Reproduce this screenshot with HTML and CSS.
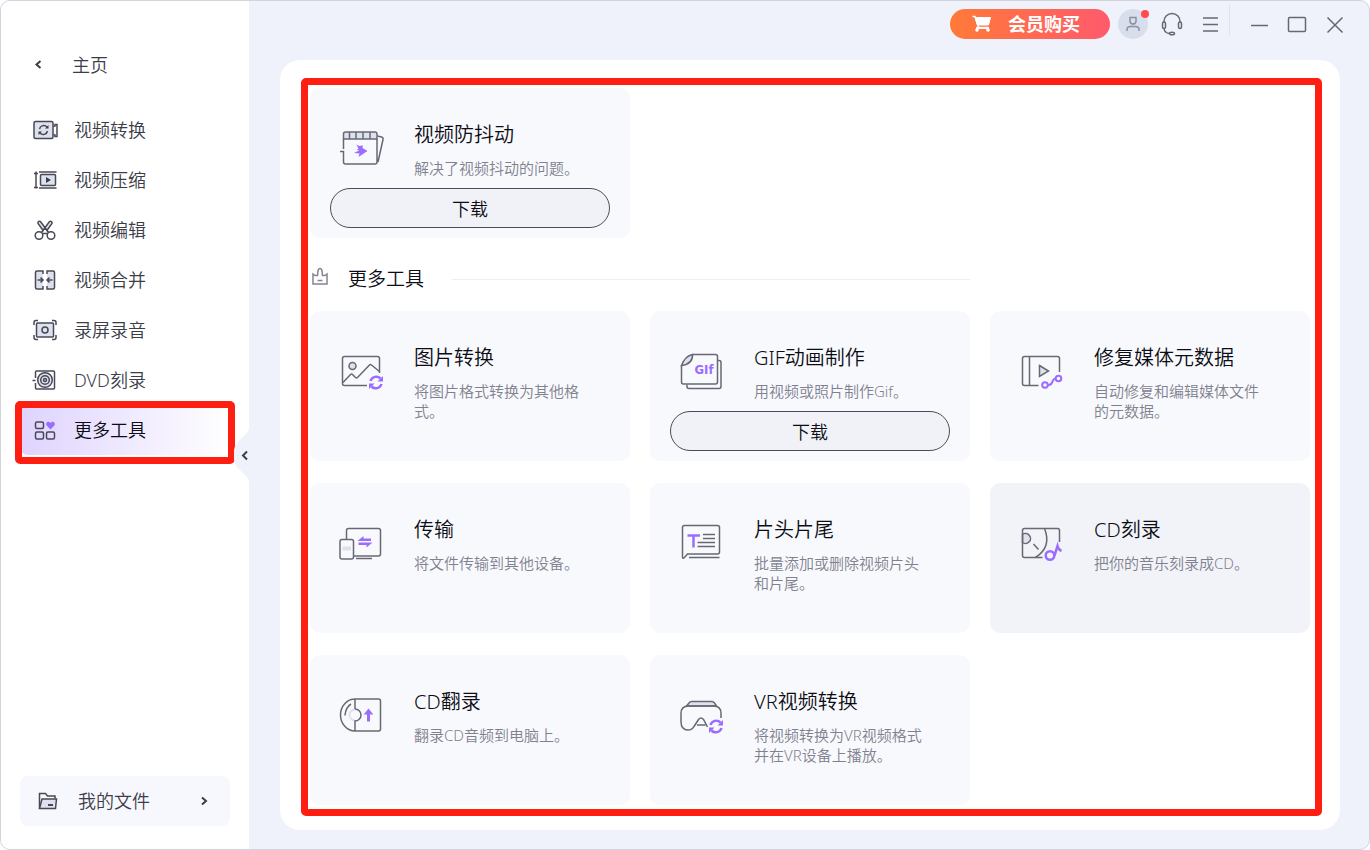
FILE: index.html
```html
<!DOCTYPE html>
<html lang="zh-CN">
<head>
    <meta charset="UTF-8">
    <meta name="viewport" content="width=device-width, initial-scale=1.0">
    <title>更多工具</title>
    <link rel="stylesheet" href="styles.css">
</head>
<body>
    <svg class="sprite" aria-hidden="true">
        <symbol id="refresh" viewBox="0 0 16 16">
            <path d="M2.5 6.5A6 6 0 0 1 12.5 4M13.5 9.5A6 6 0 0 1 3.5 12" fill="none" stroke="currentColor" stroke-width="2.5"/>
            <path d="M15 1.5V7H9.5zM1 14.5V9h5.5z" fill="currentColor"/>
        </symbol>
    </svg>

    <div class="window">
        <aside class="sidebar">
            <a href="#" class="home">
                <svg class="nav-icon" viewBox="0 0 26 26"><path d="M8.5 9L4.5 12.5l4 3.5" class="chevron"/></svg>
                <span>主页</span>
            </a>

            <nav class="nav">
                <a href="#" class="nav-item">
                    <svg class="nav-icon" viewBox="0 0 26 26">
                        <rect x="2" y="4.5" width="19" height="17" rx="1.5" class="tint"/>
                        <path d="M21.5 9.5l1.5-.5V7.5h2v12h-2V18l-1.5-.5"/>
                        <path d="M7.5 12a4.3 4.3 0 0 1 7.5-2M15.5 14a4.3 4.3 0 0 1-7.5 2"/>
                        <path d="M16.5 8v3.5H13zM6.500 18v-3.5H10z" class="solid"/>
                    </svg>
                    <span>视频转换</span>
                </a>
                <a href="#" class="nav-item">
                    <svg class="nav-icon" viewBox="0 0 26 26">
                        <path d="M2 6.5h4M4 4.5v17M2 20.5h4M7 21h17.5M7 5h17.5"/>
                        <rect x="8.5" y="7.5" width="15" height="11" rx="1" class="tint"/>
                        <path d="M14 10l5 3-5 3z" class="solid"/>
                    </svg>
                    <span>视频压缩</span>
                </a>
                <a href="#" class="nav-item">
                    <svg class="nav-icon" viewBox="0 0 26 26">
                        <circle cx="7" cy="18.5" r="3.8"/>
                        <circle cx="19" cy="18.5" r="3.8"/>
                        <path d="M9.5 15.5l8-11c1.5-1 3 .5 2.5 2l-5.5 7.5M16.5 15.5l-8-11c-1.5-1-3 .5-2.5 2l5.500 7.500M10.500 16.500h5" class="tint"/>
                    </svg>
                    <span>视频编辑</span>
                </a>
                <a href="#" class="nav-item">
                    <svg class="nav-icon" viewBox="0 0 26 26">
                        <path d="M11 7V4H5Q3.5 4 3.5 5.5v15Q3.5 22 5 22h6v-3M15 7V4h6q1.5 0 1.5 1.5v15q0 1.5-1.5 1.5h-6v-3" class="tint"/>
                        <path d="M5.5 13H11M8.5 10.5L11 13l-2.5 2.5M20.5 13H15M17.5 10.5L15 13l2.5 2.5"/>
                    </svg>
                    <span>视频合并</span>
                </a>
                <a href="#" class="nav-item">
                    <svg class="nav-icon" viewBox="0 0 26 26">
                        <path d="M2 8V5.5Q2 3.5 4 3.5h2M20 3.5h2q2 0 2 2V8M24 18v2.5q0 2-2 2h-2M6 22.5H4q-2 0-2-2V18"/>
                        <rect x="4.5" y="6" width="17" height="14" rx="1" class="tint"/>
                        <circle cx="13" cy="13" r="3"/>
                    </svg>
                    <span>录屏录音</span>
                </a>
                <a href="#" class="nav-item">
                    <svg class="nav-icon" viewBox="0 0 26 26">
                        <path d="M3.5 11V5q0-1 1-1h17q1 0 1 1v16q0 1-1 1h-17q-1 0-1-1v-5M.5 13.5h3"/>
                        <circle cx="13" cy="13" r="7.3" class="tint"/>
                        <circle cx="13" cy="13" r="4.3"/>
                        <circle cx="13" cy="13" r="1.5"/>
                    </svg>
                    <span>DVD刻录</span>
                </a>
                <a href="#" class="nav-item active">
                    <svg class="nav-icon" viewBox="0 0 26 26">
                        <rect x="3.5" y="5" width="8" height="6.5" rx="1.5"/>
                        <rect x="3.5" y="15" width="8" height="7" rx="1.5"/>
                        <rect x="14.5" y="15" width="8" height="7" rx="1.5"/>
                        <path d="M18.5 12.5l-4-4.2c-1.500-2.300 2-5 4-2.300 2-2.700 5.500 0 4 2.300z" class="accent-solid"/>
                    </svg>
                    <span>更多工具</span>
                </a>
            </nav>

            <a href="#" class="my-files">
                <svg class="nav-icon" viewBox="0 0 26 26">
                    <path d="M5.5 20.5v-15h6l2 2.5h7.5v2.5"/>
                    <path d="M5.5 20.5l2.5-9.5h14.5l-1 9.5z" class="tint"/>
                    <path d="M14 17h5" stroke-width="2"/>
                </svg>
                <span>我的文件</span>
                <svg class="arrow" viewBox="0 0 12 12"><path d="M4 2.5L8 6l-4 3.5" class="chevron"/></svg>
            </a>

            <button class="collapse" aria-label="收起">
                <svg viewBox="0 0 16 54">
                    <path d="M16 0C15 8 2 12 1 22v10c1 10 14 14 15 22z" class="notch"/>
                    <path d="M14 23.5l-4 4 4 4" class="chevron"/>
                </svg>
            </button>
        </aside>

        <main class="main">
            <header class="topbar">
                <button class="buy">
                    <svg viewBox="0 0 20 18">
                        <path d="M.5 1.5H3L6.5 12.5h10" fill="none" stroke="#fff" stroke-width="1.5"/>
                        <path d="M3 2.5h15.5L16.5 10H5.5z" fill="#fff" stroke="#fff" stroke-width="1"/>
                        <path d="M4 13h13" stroke="#fff" stroke-width="2"/>
                        <circle cx="5" cy="15" r="1.8" fill="#fff" stroke="none"/>
                        <circle cx="16" cy="15" r="1.8" fill="#fff" stroke="none"/>
                    </svg>
                    <span>会员购买</span>
                </button>
                <button class="avatar" aria-label="账户">
                    <svg viewBox="0 0 16 16">
                        <path d="M5 1.5h6v4q-.5 2.5-3 2.5T5 5.5zM2 15v-1.5q0-3 3.5-3h5q3.5 0 3.5 3V15"/>
                    </svg>
                    <span class="dot"></span>
                </button>
                <button class="bar-btn" aria-label="客服">
                    <svg viewBox="0 0 24 24">
                        <path d="M4 11V9.5a8 8 0 0 1 16 0V11"/>
                        <rect x="2.5" y="10" width="3" height="6.5" rx="1.5"/>
                        <rect x="18.5" y="10" width="3" height="6.5" rx="1.5"/>
                        <path d="M4 16.5q.5 4.5 5.5 5"/>
                        <ellipse cx="12" cy="21.5" rx="2.5" ry="1.3"/>
                    </svg>
                </button>
                <button class="bar-btn" aria-label="菜单">
                    <svg viewBox="0 0 24 24"><path d="M5 6h15M5 12.5h15M5 19h15"/></svg>
                </button>
                <span class="divider"></span>
                <button class="bar-btn" aria-label="最小化">
                    <svg viewBox="0 0 24 24"><path d="M4 13.5h17"/></svg>
                </button>
                <button class="bar-btn" aria-label="最大化">
                    <svg viewBox="0 0 24 24"><rect x="3.5" y="5.5" width="17" height="14" rx="1"/></svg>
                </button>
                <button class="bar-btn" aria-label="关闭">
                    <svg viewBox="0 0 24 24"><path d="M4.5 5.5l15 15M19.5 5.5l-15 15"/></svg>
                </button>
            </header>

            <div class="panel">
                <section class="tool-grid">
                    <article class="card">
                        <svg class="card-icon" viewBox="0 0 48 48">
                            <path d="M5.5 15V10q0-2 2-2H37q2 0 2 2v5z" class="tint"/>
                            <path d="M11.5 8v7M18 8v7M25 8v7M32 8v7"/>
                            <path d="M5.5 15v10M2 27.5h3.5V38q0 2 2 2H37q2 0 2-2V15M39.5 12l4 1q2 .5 1.5 2.5L40 38"/>
                            <path d="M18.5 20.5l2.5 1.500 4-.5-.5 2.500 5 3-9 6 1-3.500-5.500-.5 5-2.500-2.500-1.500h2z" class="accent-solid"/>
                        </svg>
                        <div class="card-text">
                            <h3>视频防抖动</h3>
                            <p>解决了视频抖动的问题。</p>
                        </div>
                        <button class="download">下载</button>
                    </article>
                </section>

                <div class="tool-grid heading-row">
                    <h2 class="heading">
                        <svg viewBox="0 0 20 20">
                            <path d="M3 7v10h14V7l-2 1.500-2.500 0L12 4q-.5-2.500-2-2.500T8 4l-.5 4.500H5z"/>
                            <path d="M7.5 13.5h5"/>
                        </svg>
                        <span>更多工具</span>
                    </h2>
                </div>

                <section class="tool-grid">
                    <article class="card">
                        <svg class="card-icon" viewBox="0 0 48 48">
                            <path d="M29 38.5H6.5q-2 0-2-2v-25q0-2 2-2h33q2 0 2 2V26"/>
                            <circle cx="14.5" cy="19" r="3.5" class="tint"/>
                            <path d="M5 35.5l7.5-8q1-1 2 0l3 3q1 1 2 0l12-12.5q1-1 2 0l8 6.5"/>
                            <use href="#refresh" x="30" y="27.5" width="16" height="16" class="accent"/>
                        </svg>
                        <div class="card-text">
                            <h3>图片转换</h3>
                            <p>将图片格式转换为其他格式。</p>
                        </div>
                    </article>

                    <article class="card">
                        <svg class="card-icon" viewBox="0 0 48 48">
                            <path d="M14.5 7.5h23q2 0 2 2V35q0 2-2 2h-32q-2 0-2-2V18.5"/>
                            <path d="M3.5 18.5Q7 9 14.5 7.5q.5 9.5-11 11z" class="tint"/>
                            <path d="M40 13.5h1q2 0 2 2v24q0 2-2 2H11q-2 0-2-2V37.5"/>
                            <text x="26" y="27" class="gif">GIf</text>
                        </svg>
                        <div class="card-text">
                            <h3>GIF动画制作</h3>
                            <p>用视频或照片制作Gif。</p>
                        </div>
                        <button class="download">下载</button>
                    </article>

                    <article class="card">
                        <svg class="card-icon" viewBox="0 0 48 48">
                            <path d="M20.5 38.5h-14q-2 0-2-2v-25q0-2 2-2h33q2 0 2 2V25M11.5 9.5v29"/>
                            <path d="M21.5 18.5l9 5.5-9 5.5z" class="tint"/>
                            <path d="M30 38c6 1 3-7 8-6.500" class="accent-line"/>
                            <circle cx="27" cy="38" r="2.8" class="accent-line"/>
                            <circle cx="40.5" cy="31.5" r="2.8" class="accent-line"/>
                        </svg>
                        <div class="card-text">
                            <h3>修复媒体元数据</h3>
                            <p>自动修复和编辑媒体文件的元数据。</p>
                        </div>
                    </article>

                    <article class="card">
                        <svg class="card-icon" viewBox="0 0 48 48">
                            <path d="M8.5 20v-8.5q0-2 2-2h30q2 0 2 2V35q0 2-2 2H16M18 39.5h16"/>
                            <rect x="2" y="20.5" width="13.5" height="19.5" rx="2"/>
                            <path d="M4.5 29.5h8.5" stroke="#dde1ec" stroke-width="4"/>
                            <path d="M19.5 22l6-5v2.5H33V22zM34.5 23.5l-6 5V26h-8v-2.500z" class="accent-solid"/>
                        </svg>
                        <div class="card-text">
                            <h3>传输</h3>
                            <p>将文件传输到其他设备。</p>
                        </div>
                    </article>

                    <article class="card">
                        <svg class="card-icon" viewBox="0 0 48 48">
                            <path d="M9.5 35H39.5q2 0 2-2V8.5q0-2-2-2h-33q-2 0-2 2V38q0 2 1.5 1z"/>
                            <path d="M11 38.5h30.5"/>
                            <path d="M25 15.5h12M25 19.5h12M19.5 23.5h17.5M19.5 27.5h17.5"/>
                            <path d="M9.5 16.5h12.5M15.5 16.5v12" class="accent-bold"/>
                        </svg>
                        <div class="card-text">
                            <h3>片头片尾</h3>
                            <p>批量添加或删除视频片头和片尾。</p>
                        </div>
                    </article>

                    <article class="card hover">
                        <svg class="card-icon" viewBox="0 0 48 48">
                            <path d="M4.5 15.5a5 5 0 1 1 0 8z" class="tint"/>
                            <path d="M24.5 38.5h-18q-2 0-2-2v-25q0-2 2-2h33q2 0 2 2V23"/>
                            <path d="M26.5 9.5Q34 28 17.5 38.5M15.5 25l5 5.5"/>
                            <circle cx="32" cy="36.5" r="4.3" class="accent-bold"/>
                            <path d="M36.5 36.5l3-9.5q1 4 4 5" class="accent-bold"/>
                        </svg>
                        <div class="card-text">
                            <h3>CD刻录</h3>
                            <p>把你的音乐刻录成CD。</p>
                        </div>
                    </article>

                    <article class="card">
                        <svg class="card-icon" viewBox="0 0 48 48">
                            <path d="M17 18.5a5.5 5.5 0 0 0 0 11" stroke="#dde1ec" stroke-width="2"/>
                            <path d="M17 18V8h23.500q2 0 2 2v28q0 2-2 2H17V30a6 6 0 0 0 0-12M17 8a14.500 16 0 0 0 0 32M7 24.500q.5-8 6-11.500"/>
                            <path d="M30.5 17.5l4.8 6H32v7h-3v-7h-3.3z" class="accent-solid"/>
                        </svg>
                        <div class="card-text">
                            <h3>CD翻录</h3>
                            <p>翻录CD音频到电脑上。</p>
                        </div>
                    </article>

                    <article class="card">
                        <svg class="card-icon" viewBox="0 0 48 48">
                            <path d="M8.5 15L11 12q1-1.5 2.5-1.5h20.5q1.5 0 2.5 1.5l2 3z" class="tint"/>
                            <path d="M43 27v-4.5q0-7.5-7.5-7.5h-25Q3 15 3 22.500v8Q3 39 10 39q4 0 6-3.500l4.500-7q2.500-3 5 0l4 7.500M19 34h8.500"/>
                            <use href="#refresh" x="30" y="27.5" width="16" height="16" class="accent"/>
                        </svg>
                        <div class="card-text">
                            <h3>VR视频转换</h3>
                            <p>将视频转换为VR视频格式并在VR设备上播放。</p>
                        </div>
                    </article>
                </section>
            </div>
        </main>
    </div>
</body>
</html>
```

FILE: styles.css
```css
* {
    margin: 0;
    padding: 0;
    box-sizing: border-box;
}

body {
    font-family: "Noto Sans", "Noto Sans CJK SC", sans-serif;
    font-weight: 350;
    background: #fff;
    color: #0c0c14;
}

a {
    color: inherit;
    text-decoration: none;
}

button {
    font: inherit;
    color: inherit;
    border: none;
    background: none;
    cursor: pointer;
}

svg {
    display: block;
    flex-shrink: 0;
    fill: none;
    stroke: #676873;
    stroke-width: 1.5;
}

.sprite {
    position: absolute;
    width: 0;
    height: 0;
}

.window {
    display: flex;
    min-height: 100vh;
    border: 1px solid #d3d3de;
    border-radius: 10px;
    background: #eff2fb;
    overflow: hidden;
}

/* Icon colours */
.tint {
    fill: #dde2ee;
}

.solid {
    fill: #3c3d49;
    stroke: none;
}

.accent {
    color: #9b6dff;
    stroke: none;
}

.accent-solid {
    fill: #9b6dff;
    stroke: none;
}

.accent-line {
    stroke: #9b6dff;
    stroke-width: 2;
}

.accent-bold {
    stroke: #9b6dff;
    stroke-width: 2.5;
}

.chevron {
    stroke: #3c3d49;
    stroke-width: 2;
}

/* Sidebar */
.sidebar {
    position: relative;
    display: flex;
    flex-direction: column;
    flex-shrink: 0;
    width: 248px;
    padding: 39px 19px 23px;
    background: #fff;
    font-size: 18px;
    line-height: 24px;
    color: #3c3d49;
}

.home,
.nav-item,
.my-files {
    display: flex;
    align-items: center;
    gap: 16px;
    height: 50px;
    padding-left: 12px;
}

.home {
    gap: 14px;
    margin-bottom: 15px;
}

.nav-icon {
    width: 26px;
    height: 26px;
    stroke: #484955;
}

.nav-item {
    border-radius: 8px;
}

.nav-item.active {
    position: relative;
    background: linear-gradient(90deg, #dfd3fe, #fff);
    color: #0c0c14;
}

.nav-item.active::after {
    content: '';
    position: absolute;
    inset: -4px -5px -9px;
    border: 7px solid #ff1e12;
    border-radius: 5px;
}

.my-files {
    gap: 18px;
    margin-top: auto;
    padding: 0 20px 0 14px;
    border-radius: 8px;
    background: #f7f8fd;
}

.arrow {
    width: 12px;
    height: 12px;
    margin-left: auto;
}

.collapse {
    position: absolute;
    top: 427px;
    right: 0;
}

.collapse svg {
    width: 16px;
    height: 54px;
}

.notch {
    fill: #eff2fb;
    stroke: none;
}

/* Top bar */
.main {
    display: flex;
    flex-direction: column;
    flex: 1;
    padding: 0 29px 19px 31px;
}

.topbar {
    display: flex;
    align-items: center;
    justify-content: flex-end;
    height: 59px;
    margin-right: -14px;
    padding-bottom: 14px;
}

.buy {
    display: flex;
    align-items: center;
    justify-content: center;
    gap: 16px;
    width: 160px;
    height: 30px;
    margin-right: 8px;
    padding-right: 8px;
    border-radius: 15px;
    background: linear-gradient(90deg, #ff7a38, #ff5a6c);
    color: #fff;
    font-size: 18px;
    font-weight: 700;
    line-height: 30px;
}

.buy svg {
    width: 20px;
    height: 18px;
}

.avatar {
    position: relative;
    display: flex;
    align-items: center;
    justify-content: center;
    width: 30px;
    height: 30px;
    margin-right: 5px;
    border-radius: 50%;
    background: #d8deeb;
}

.avatar svg {
    width: 16px;
    height: 16px;
    stroke: #8b90a3;
}

.dot {
    position: absolute;
    top: 1px;
    right: -1px;
    width: 8px;
    height: 8px;
    border-radius: 50%;
    background: #ff4d4f;
}

.bar-btn {
    display: flex;
    align-items: center;
    justify-content: center;
    width: 38px;
    height: 30px;
}

.bar-btn svg {
    width: 24px;
    height: 24px;
}

.divider {
    width: 1px;
    height: 30px;
    margin: 0 10px 7px 0;
    background: #dfe2ee;
}

/* Tools panel */
.panel {
    position: relative;
    flex: 1;
    padding: 28px 30px 24px;
    border-radius: 20px;
    background: #fff;
}

.panel::after {
    content: '';
    position: absolute;
    inset: 18px 18px 14px 21px;
    border: 7px solid #ff1e12;
    border-radius: 5px;
    pointer-events: none;
}

.tool-grid {
    display: grid;
    grid-template-columns: repeat(3, 1fr);
    gap: 22px 20px;
}

.heading-row {
    padding: 29px 0 20px;
}

.heading {
    display: flex;
    align-items: center;
    gap: 18px;
    grid-column: span 2;
    font-size: 19px;
    font-weight: 350;
    line-height: 24px;
}

.heading svg {
    width: 20px;
    height: 20px;
    margin-bottom: 4px;
    stroke: #84858f;
}

.heading::after {
    content: '';
    flex: 1;
    height: 1px;
    margin-left: 10px;
    background: #eeeef3;
}

.card {
    display: grid;
    grid-template-columns: 64px 1fr;
    grid-template-rows: 58px 40px;
    gap: 10px 20px;
    height: 150px;
    padding: 32px 20px 0;
    border-radius: 10px;
    background: #f8f9fd;
}

.card.hover {
    background: #f2f3f8;
}

.card-icon {
    width: 48px;
    height: 48px;
    margin-top: 4px;
    justify-self: center;
}

.gif {
    fill: #9b6dff;
    stroke: none;
    font-family: "DejaVu Sans Condensed", "DejaVu Sans", sans-serif;
    font-size: 13px;
    font-weight: 700;
    text-anchor: middle;
}

.card-text {
    padding-right: 20px;
}

.card h3 {
    margin-bottom: 8px;
    font-size: 20px;
    font-weight: 350;
    line-height: 30px;
}

.card p {
    font-size: 15px;
    line-height: 20px;
    color: #80818f;
}

.download {
    grid-column: 1 / -1;
    height: 40px;
    border: 1px solid #4b4c57;
    border-radius: 20px;
    background: #f1f2f8;
    font-size: 18px;
}
```
